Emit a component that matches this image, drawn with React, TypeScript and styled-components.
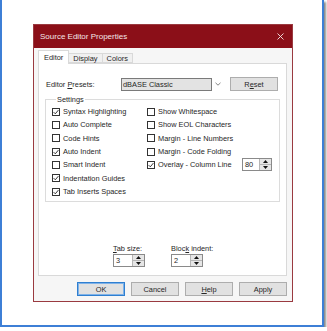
import styled, { createGlobalStyle } from 'styled-components';

const GlobalStyle = createGlobalStyle`
	html, body {
		margin: 0;
		padding: 0;
		background: #ffffff;
	}
	body {
		font-family: 'Liberation Sans', Arial, sans-serif;
		font-size: 7.4px;
		color: #262626;
	}
`;

const Frame = styled.div`
	box-sizing: border-box;
	width: 324px;
	height: 327px;
	border: 2px solid #3d7fd6;
	border-top: 0;
	box-shadow: 2px 2px 2px rgba(40, 40, 40, 0.55);
	padding: 24px 0 0 31px;
	background: #ffffff;
`;

const Dialog = styled.div`
	box-sizing: border-box;
	width: 260px;
	height: 278px;
	border: 1px solid #9a3a40;
	background: #f6f6f6;
	display: flex;
	flex-direction: column;
`;

const TitleBar = styled.div`
	height: 23px;
	background: #8b0f18;
	color: #f4e6e7;
	font-size: 8px;
	display: flex;
	align-items: center;
	padding: 0 8px 0 6px;

	.title {
		flex: 1;
	}
`;

const Body = styled.div`
	padding: 2px 5px 0 4px;
	display: flex;
	flex-direction: column;
	flex: 1;
`;

const TabRow = styled.div`
	display: flex;
	align-items: flex-end;
	height: 13px;
`;

const Tab = styled.div<{ $active?: boolean }>`
	box-sizing: border-box;
	height: ${(p) => (p.$active ? '14px' : '10px')};
	margin-bottom: ${(p) => (p.$active ? '-1px' : '0')};
	padding: 0 ${(p) => (p.$active ? '5px' : '4px')};
	border: 1px solid #d9d9d9;
	border-bottom: ${(p) => (p.$active ? '0' : '1px solid #d9d9d9')};
	border-left: ${(p) => (p.$active ? '1px solid #d9d9d9' : '0')};
	background: ${(p) => (p.$active ? '#ffffff' : '#f0f0f0')};
	display: flex;
	align-items: center;
	position: relative;
	z-index: ${(p) => (p.$active ? 1 : 0)};
`;

const Panel = styled.div`
	box-sizing: border-box;
	width: 249px;
	height: 213px;
	border: 1px solid #d9d9d9;
	background: #ffffff;
	display: flex;
	flex-direction: column;
	padding: 13px 0 8px 6px;
`;

const PresetRow = styled.div`
	display: flex;
	align-items: center;
	height: 14px;
	padding-left: 1px;

	.label {
		width: 75px;
	}
`;

const Combo = styled.div`
	display: flex;
	align-items: center;
	height: 13px;

	.field {
		box-sizing: border-box;
		width: 91px;
		height: 13px;
		border: 1px solid #7a7a7a;
		background: #e3e3e3;
		display: flex;
		align-items: center;
		padding-left: 1px;
	}
	.arrow {
		box-sizing: border-box;
		width: 12px;
		height: 13px;
		display: flex;
		align-items: center;
		justify-content: center;
	}
`;

const PushButton = styled.button<{ $default?: boolean }>`
	box-sizing: border-box;
	width: 48px;
	height: 14px;
	padding: 0;
	margin: 0;
	font-family: inherit;
	font-size: 7.4px;
	color: #262626;
	background: #e1e1e1;
	border: 1px solid ${(p) => (p.$default ? '#2f7fd0' : '#adadad')};
	box-shadow: ${(p) => (p.$default ? 'inset 0 0 0 1px #7fb2e8' : 'none')};
	display: flex;
	align-items: center;
	justify-content: center;
`;

const Group = styled.fieldset`
	box-sizing: border-box;
	width: 235px;
	margin: 4px 0 0 0;
	padding: 0 7px 3px 6px;
	border: 1px solid #dcdcdc;
	min-width: 0;

	legend {
		padding: 0 1px;
		margin-left: 4px;
		line-height: 9px;
	}
`;

const CheckGrid = styled.div`
	display: grid;
	grid-template-columns: 95px 1fr;
	grid-template-rows: repeat(7, 13.33px);
	grid-auto-flow: column;
	margin-top: 1px;
`;

const CheckRow = styled.div`
	display: flex;
	align-items: center;
	gap: 3px;
`;

const Box = styled.span`
	box-sizing: border-box;
	width: 8px;
	height: 8px;
	border: 1px solid #333333;
	background: #ffffff;
	display: flex;
	align-items: center;
	justify-content: center;
	flex-shrink: 0;
`;

const Spin = styled.div<{ $w: number }>`
	box-sizing: border-box;
	width: ${(p) => p.$w}px;
	height: 13px;
	border: 1px solid #8a8a8a;
	background: #ffffff;
	display: flex;

	.value {
		flex: 1;
		display: flex;
		align-items: center;
		padding-left: 2px;
	}
	.buttons {
		width: 11px;
		display: flex;
		flex-direction: column;
		border-left: 1px solid #b5b5b5;
	}
	.up,
	.down {
		flex: 1;
		background: #e6e6e6;
		display: flex;
		align-items: center;
		justify-content: center;
	}
	.up {
		border-bottom: 1px solid #b5b5b5;
	}
`;

const SpinRow = styled.div`
	margin-top: auto;
	display: flex;
	gap: 26px;
	padding-left: 68px;
`;

const SpinField = styled.div`
	display: flex;
	flex-direction: column;
	gap: 1px;

	.label {
		line-height: 9px;
	}
`;

const ButtonRow = styled.div`
	display: flex;
	justify-content: flex-end;
	gap: 6px;
	width: 249px;
	margin-top: 6px;
`;

function Check({ checked }: { checked?: boolean }) {
	return (
		<Box>
			{checked && (
				<svg width='6' height='6' viewBox='0 0 6 6'>
					<path d='M0.6 3.1 L2.3 4.8 L5.4 1.1' fill='none' stroke='#222' strokeWidth='0.9' />
				</svg>
			)}
		</Box>
	);
}

function SpinBox({ value, width }: { value: string; width: number }) {
	return (
		<Spin $w={width}>
			<div className='value'>{value}</div>
			<div className='buttons'>
				<div className='up'>
					<svg width='5' height='3' viewBox='0 0 5 3'>
						<path d='M0 3 L2.5 0 L5 3 Z' fill='#111' />
					</svg>
				</div>
				<div className='down'>
					<svg width='5' height='3' viewBox='0 0 5 3'>
						<path d='M0 0 L2.5 3 L5 0 Z' fill='#111' />
					</svg>
				</div>
			</div>
		</Spin>
	);
}

const settings: { label: string; checked?: boolean; extra?: boolean }[] = [
	{ label: 'Syntax Highlighting', checked: true },
	{ label: 'Auto Complete' },
	{ label: 'Code Hints' },
	{ label: 'Auto Indent', checked: true },
	{ label: 'Smart Indent' },
	{ label: 'Indentation Guides', checked: true },
	{ label: 'Tab Inserts Spaces', checked: true },
	{ label: 'Show Whitespace' },
	{ label: 'Show EOL Characters' },
	{ label: 'Margin - Line Numbers' },
	{ label: 'Margin - Code Folding' },
	{ label: 'Overlay - Column Line', checked: true, extra: true },
];

export default function App() {
	return (
		<>
			<GlobalStyle />
			<Frame>
				<Dialog>
					<TitleBar>
						<span className='title'>Source Editor Properties</span>
						<svg width='7' height='7' viewBox='0 0 7 7'>
							<path d='M0.5 0.5 L6.5 6.5 M6.5 0.5 L0.5 6.5' stroke='#f4e6e7' strokeWidth='0.9' />
						</svg>
					</TitleBar>
					<Body>
						<TabRow>
							<Tab $active>Editor</Tab>
							<Tab>Display</Tab>
							<Tab>Colors</Tab>
						</TabRow>
						<Panel>
							<PresetRow>
								<span className='label'>
									Editor <u>P</u>resets:
								</span>
								<Combo>
									<div className='field'>dBASE Classic</div>
									<div className='arrow'>
										<svg width='6' height='4' viewBox='0 0 6 4'>
											<path d='M0.5 0.8 L3 3.2 L5.5 0.8' fill='none' stroke='#666' strokeWidth='0.8' />
										</svg>
									</div>
								</Combo>
								<PushButton style={{ marginLeft: 6 }}>
									<span>
										R<u>e</u>set
									</span>
								</PushButton>
							</PresetRow>
							<Group>
								<legend>Settings</legend>
								<CheckGrid>
									{settings.map((s, i) => (
										<CheckRow key={i}>
											<Check checked={s.checked} />
											<span>{s.label}</span>
											{s.extra && (
												<span style={{ marginLeft: 'auto' }}>
													<SpinBox value='80' width={30} />
												</span>
											)}
										</CheckRow>
									))}
								</CheckGrid>
							</Group>
							<SpinRow>
								<SpinField>
									<span className='label'>
										<u>T</u>ab size:
									</span>
									<SpinBox value='3' width={32} />
								</SpinField>
								<SpinField>
									<span className='label'>
										Bloc<u>k</u> indent:
									</span>
									<SpinBox value='2' width={32} />
								</SpinField>
							</SpinRow>
						</Panel>
						<ButtonRow>
							<PushButton $default>OK</PushButton>
							<PushButton>Cancel</PushButton>
							<PushButton>
								<span>
									<u>H</u>elp
								</span>
							</PushButton>
							<PushButton>Apply</PushButton>
						</ButtonRow>
					</Body>
				</Dialog>
			</Frame>
		</>
	);
}
